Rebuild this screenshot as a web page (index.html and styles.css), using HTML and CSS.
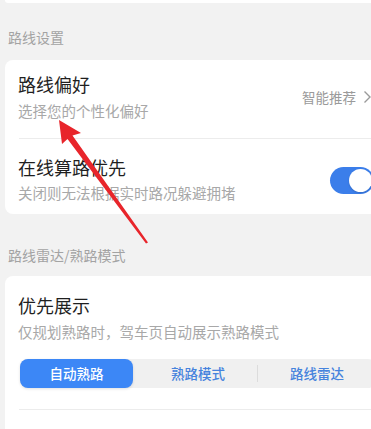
FILE: index.html
```html
<!DOCTYPE html>
<html lang="zh">
<head>
<meta charset="utf-8">
<link rel="stylesheet" href="styles.css">
</head>
<body>
<div class="page">
  <div class="topcard"></div>
  <div class="sec-head sec-head-1">路线设置</div>
  <div class="card card-1">
    <div class="row row-1">
      <div class="row-text">
        <div class="title">路线偏好</div>
        <div class="sub">选择您的个性化偏好</div>
      </div>
      <div class="row-value">智能推荐
        <svg class="chev" width="9" height="14" viewBox="0 0 9 14"><path d="M1.5 1.5 L7 7 L1.5 12.5" fill="none" stroke="#9a9a9a" stroke-width="1.4"/></svg>
      </div>
    </div>
    <div class="divider"></div>
    <div class="row row-2">
      <div class="row-text">
        <div class="title">在线算路优先</div>
        <div class="sub">关闭则无法根据实时路况躲避拥堵</div>
      </div>
      <div class="toggle"><div class="knob"></div></div>
    </div>
  </div>
  <div class="sec-head sec-head-2">路线雷达/熟路模式</div>
  <div class="card card-2">
    <div class="title t2">优先展示</div>
    <div class="sub">仅规划熟路时，驾车页自动展示熟路模式</div>
    <div class="seg">
      <div class="seg-item active">自动熟路</div>
      <div class="seg-item">熟路模式</div>
      <div class="seg-sep"></div>
      <div class="seg-item">路线雷达</div>
    </div>
    <div class="divider d2"></div>
    <div class="title t3">熟路推荐</div>
  </div>
</div>
<svg class="arrow" width="371" height="429" viewBox="0 0 371 429">
  <polygon points="59,120 81,133 72.5,135.5 148,242.4 146,243.6 67.5,139 62,144" fill="#e8252b"/>
</svg>
</body>
</html>
```

FILE: styles.css
```css
html, body {
  margin: 0;
  padding: 0;
}
body {
  width: 371px;
  height: 429px;
  overflow: hidden;
  background: #f2f2f2;
  font-family: "Noto Sans CJK SC", "Noto Sans", sans-serif;
  position: relative;
}
.page {
  width: 371px;
  overflow: hidden;
}
.topcard {
  height: 3px;
  margin-left: 5px;
  width: 400px;
  background: #fff;
  border-radius: 0 0 8px 8px;
}
.sec-head {
  font-size: 14px;
  line-height: 20px;
  color: #a3a3a3;
  padding-left: 8px;
}
.sec-head-1 {
  padding-top: 24px;
  padding-bottom: 13px;
}
.sec-head-2 {
  padding-top: 31px;
  padding-bottom: 11px;
}
.card {
  margin-left: 5px;
  width: 381px;
  background: #fff;
  border-radius: 8px;
  padding-left: 13px;
  padding-right: 12px;
  box-sizing: border-box;
}
.row {
  display: flex;
  align-items: center;
  justify-content: space-between;
}
.row-1 {
  padding-top: 12px;
  padding-bottom: 17px;
}
.row-2 {
  padding-top: 16px;
  padding-bottom: 11px;
}
.title {
  font-size: 18px;
  line-height: 24px;
  color: #1f1f1f;
}
.sub {
  font-size: 14.5px;
  line-height: 20px;
  color: #a8a8a8;
  margin-top: 4px;
}
.row-1 .sub {
  margin-top: 5px;
}
.row-value {
  display: flex;
  align-items: center;
  gap: 7px;
  font-size: 13.5px;
  color: #9a9a9a;
  padding-right: 2px;
}
.chev {
  display: block;
}
.divider {
  height: 1px;
  background: #ececec;
  margin-left: 1px;
  margin-right: -12px;
}
.toggle {
  width: 44px;
  height: 27px;
  border-radius: 14px;
  background: #3b7eea;
  position: relative;
  margin-top: 2px;
}
.knob {
  position: absolute;
  right: 2px;
  top: 2px;
  width: 23px;
  height: 23px;
  border-radius: 50%;
  background: #fff;
  box-shadow: 0 1px 2px rgba(0,0,0,0.15);
}
.card-2 {
  padding-top: 17px;
  height: 170px;
}
.card-2 .sub {
  margin-top: 5px;
}
.seg {
  margin-top: 17px;
  margin-left: 2px;
  height: 29px;
  display: flex;
  align-items: center;
  background: #f0f0f0;
  border-radius: 8px;
  margin-right: -2px;
}
.seg-item {
  flex: 1;
  height: 29px;
  line-height: 29px;
  text-align: center;
  font-size: 13.5px;
  color: #4683dd;
  font-weight: 500;
}
.seg-item.active {
  flex: 0 0 113px;
  background: #3c87f6;
  color: #fff;
  border-radius: 8px;
  box-shadow: 0 1px 3px rgba(0,0,0,0.12);
  margin-right: 6px;
}
.seg-sep {
  width: 1px;
  height: 17px;
  background: #dcdcdc;
}
.d2 {
  margin-top: 21px;
}
.t3 {
  margin-top: 18px;
}
.arrow {
  position: absolute;
  left: 0;
  top: 0;
  pointer-events: none;
}
```
